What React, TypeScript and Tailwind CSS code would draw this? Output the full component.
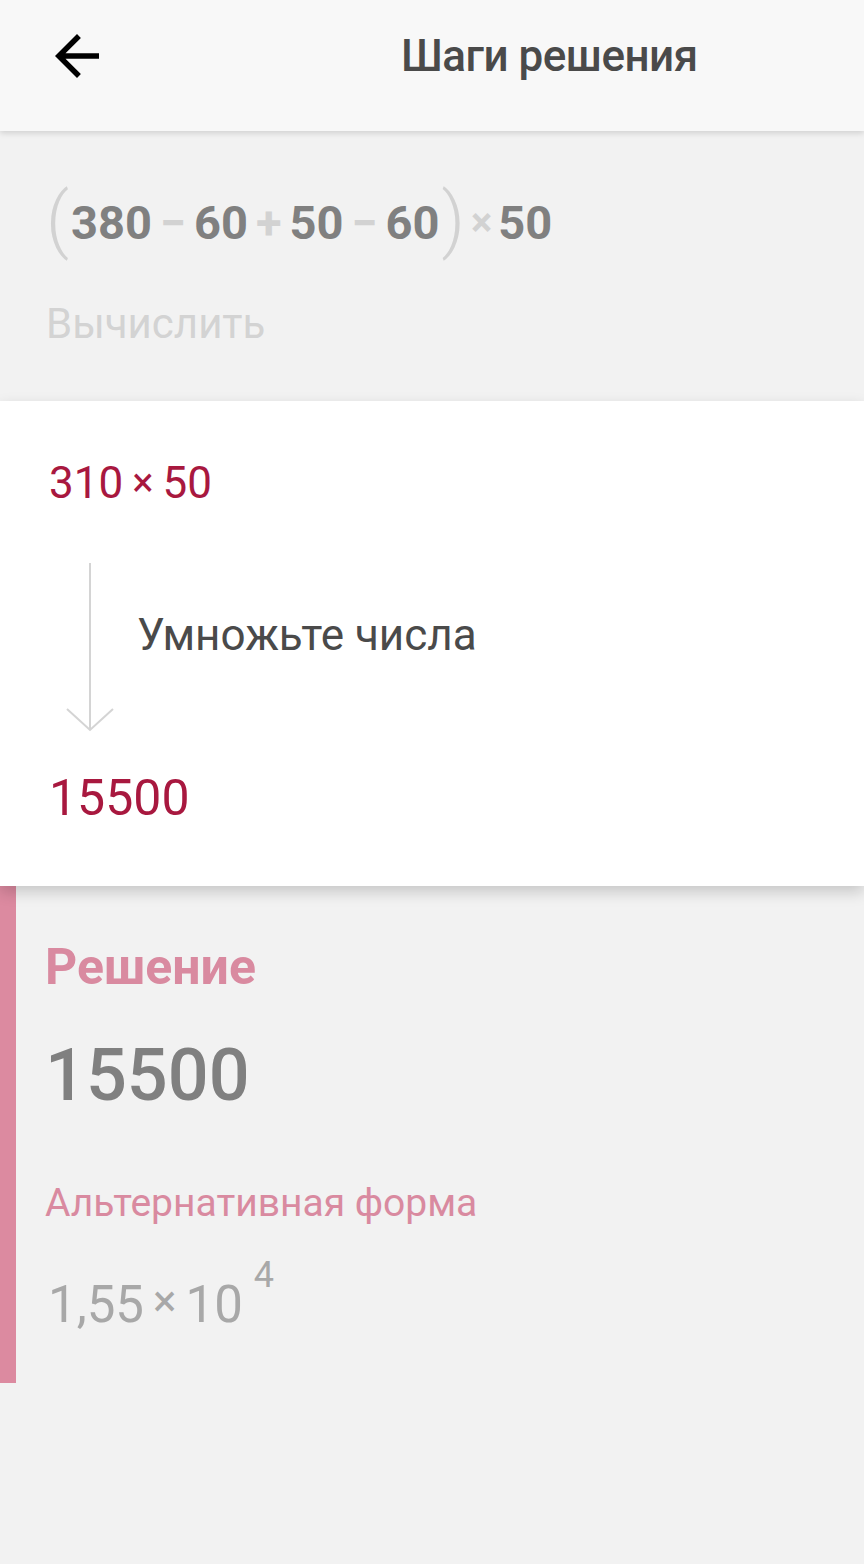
import React from 'react';

const font = { fontFamily: 'Roboto, "Noto Sans", sans-serif' };

function BackArrow() {
  return (
    <svg width="66" height="66" viewBox="0 0 24 24" className="block">
      <path d="M20 11H7.83l5.59-5.59L12 4l-8 8 8 8 1.41-1.41L7.83 13H20v-2z" fill="#000" />
    </svg>
  );
}

function StepArrow() {
  return (
    <svg width="50" height="172" viewBox="0 0 50 172" className="block">
      <line x1="24" y1="0" x2="24" y2="166" stroke="#d4d4d4" strokeWidth="2" />
      <polyline points="1,146 24,167 47,146" fill="none" stroke="#d4d4d4" strokeWidth="2" />
    </svg>
  );
}

export default function App() {
  return (
    <div className="min-h-[1564px] w-[864px] bg-[#f2f2f2] overflow-hidden" style={font}>
      {/* Шапка */}
      <header className="relative z-20 h-[131px] bg-[#f8f8f8] shadow-[0_2px_6px_rgba(0,0,0,0.15)] flex items-center pb-[20px]">
        <div className="pl-[44px]">
          <BackArrow />
        </div>
        <h1 className="ml-[291px] text-[44px] font-medium text-[#4a4a4a] tracking-[-0.5px]">Шаги решения</h1>
      </header>

      {/* Исходное выражение */}
      <section className="pl-[46px] pt-[56px] pb-[56px]">
        <div className="flex items-center h-[72px] font-bold text-[47px] text-[#808080]">
          <span className="text-[72px] font-light text-[#d2d2d2] leading-none -mt-[6px] mr-[2px]">(</span>
          <span>380</span>
          <span className="mx-[8px] text-[#d2d2d2]">−</span>
          <span>60</span>
          <span className="mx-[8px] text-[#d2d2d2]">+</span>
          <span>50</span>
          <span className="mx-[8px] text-[#d2d2d2]">−</span>
          <span>60</span>
          <span className="text-[72px] font-light text-[#d2d2d2] leading-none -mt-[6px] ml-[2px]">)</span>
          <span className="mx-[6px] text-[40px] text-[#d2d2d2]">×</span>
          <span>50</span>
        </div>
        <div className="mt-[44px] text-[42px] text-[#d3d3d3] leading-none">Вычислить</div>
      </section>

      {/* Карточка шага */}
      <section className="relative z-10 bg-white h-[485px] shadow-[0_6px_14px_rgba(0,0,0,0.18)] pl-[49px] pt-[60px]">
        <div className="text-[44px] text-[#a8183f] leading-none flex items-center">
          <span>310</span>
          <span className="mx-[9px] text-[40px]">×</span>
          <span>50</span>
        </div>
        <div className="flex mt-[58px] ml-[17px]">
          <StepArrow />
          <div className="ml-[21px] mt-[50px] text-[44px] text-[#4a4a4a] leading-none">Умножьте числа</div>
        </div>
        <div className="mt-[38px] text-[50px] text-[#a8183f] leading-none">15500</div>
      </section>

      {/* Решение */}
      <section className="flex">
        <div className="w-[16px] h-[497px] bg-[#dc8aa0]" />
        <div className="pl-[29px] pt-[56px]">
          <div className="text-[50px] font-bold text-[#d98aa0] leading-none">Решение</div>
          <div className="mt-[48px] text-[72px] font-medium text-[#808080] leading-none">15500</div>
          <div className="mt-[72px] text-[39px] text-[#d98aa0] leading-none">Альтернативная форма</div>
          <div className="mt-[34px] flex items-start text-[51px] text-[#a8a8a8] leading-none pl-[3px]">
            <span className="mt-[22px]">1,55</span>
            <span className="mt-[22px] mx-[9px] text-[44px]">×</span>
            <span className="mt-[22px]">10</span>
            <span className="ml-[11px] text-[36px]">4</span>
          </div>
        </div>
      </section>
    </div>
  );
}
